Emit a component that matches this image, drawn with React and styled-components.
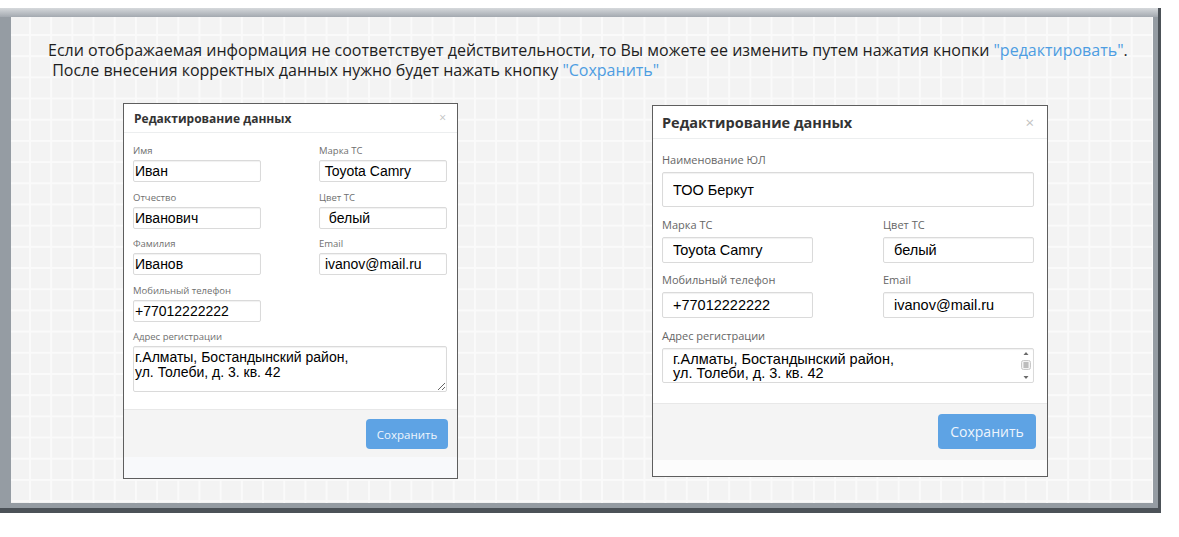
import React from 'react';
import styled, { createGlobalStyle } from 'styled-components';

const GlobalStyle = createGlobalStyle`
  html, body { margin: 0; padding: 0; background: #fff; }
  body { font-family: "Open Sans", "Noto Sans", sans-serif; }
`;

const S = {
  sm: {
    width: 335, height: 376, top: 0,
    headH: 29, headPad: '0 11px 0 10px', titleSize: 12, closeSize: 12,
    bodyPad: '12px 10px 17px 9px', colW: 128, colGap: 58, rowGap: 9.5,
    labelSize: 9.5, labelLH: 12, labelGap: 3, labelColor: '#6f6f6f',
    inputH: 22, tallH: 22, valueSize: 14, inputPadX: 1,
    areaH: 46, areaLH: 15, areaPad: '3px 1px',
    footPad: '9px 9px 8px', btnW: 82, btnH: 30, btnFont: 11.5,
    bg: '#f8f9fb',
  },
  lg: {
    width: 396, height: 372, top: 2,
    headH: 33, headPad: '0 13px 0 9px', titleSize: 14.5, closeSize: 15,
    bodyPad: '14px 13px 20px 9px', colW: 151, colGap: 70, rowGap: 10.5,
    labelSize: 11, labelLH: 14, labelGap: 5, labelColor: '#666',
    inputH: 26, tallH: 35, valueSize: 14.5, inputPadX: 10,
    areaH: 35, areaLH: 14, areaPad: '3px 16px 3px 10px',
    footPad: '10px 11px 11px', btnW: 98, btnH: 35, btnFont: 14,
    bg: '#fcfcfc',
  },
};

const v = (key) => (p) => S[p.$v][key];

const Page = styled.div`
  padding-top: 8px;
`;

const Frame = styled.div`
  width: 1161px;
  height: 505px;
  box-sizing: border-box;
  padding: 9px 8px 10px 11px;
  background: linear-gradient(to bottom, #d6d9dc 0, #a3a9b0 9px, #959ca3 9px);
  box-shadow: inset -3px -5px 0 #4c5258;
`;

const Board = styled.div`
  height: 100%;
  box-sizing: border-box;
  padding-top: 23px;
  background-color: #f3f3f3;
  background-image:
    linear-gradient(to right, #fafafa 0, #fafafa 2px, transparent 2px),
    linear-gradient(to bottom, #fafafa 0, #fafafa 2px, transparent 2px);
  background-size: 21.2px 21.2px;
  background-position: 18px 17px;
`;

const Message = styled.div`
  padding-left: 37px;
  font-size: 16px;
  line-height: 20px;
  color: #1e1e1e;
`;

const Line = styled.span`
  display: block;
  white-space: pre;
`;

const Link = styled.span`
  color: #4d9de2;
`;

const ModalsRow = styled.div`
  display: flex;
  align-items: flex-start;
  gap: 194px;
  margin-top: 23px;
  padding-left: 112px;
`;

const Modal = styled.div`
  width: ${v('width')}px;
  height: ${v('height')}px;
  margin-top: ${v('top')}px;
  box-sizing: border-box;
  border: 1px solid #5e5e5e;
  background: ${v('bg')};
  display: flex;
  flex-direction: column;
`;

const Header = styled.div`
  height: ${v('headH')}px;
  box-sizing: border-box;
  padding: ${v('headPad')};
  border-bottom: 1px solid #eceeef;
  background: #fff;
  display: flex;
  align-items: center;
  justify-content: space-between;
`;

const Title = styled.h4`
  margin: 0;
  font-size: ${v('titleSize')}px;
  font-weight: 700;
  color: #333;
`;

const Close = styled.span`
  font-size: ${v('closeSize')}px;
  line-height: 1;
  color: #c2c2c2;
`;

const Body = styled.div`
  background: #fff;
  padding: ${v('bodyPad')};
  display: grid;
  grid-template-columns: ${v('colW')}px ${v('colW')}px;
  column-gap: ${v('colGap')}px;
  row-gap: ${v('rowGap')}px;
`;

const Field = styled.div`
  grid-column: ${(p) => (p.$full ? '1 / -1' : 'auto')};
  display: flex;
  flex-direction: column;
`;

const Label = styled.label`
  font-size: ${v('labelSize')}px;
  line-height: ${v('labelLH')}px;
  margin-bottom: ${v('labelGap')}px;
  color: ${v('labelColor')};
`;

const Input = styled.input`
  width: 100%;
  height: ${(p) => (p.$tall ? S[p.$v].tallH : S[p.$v].inputH)}px;
  box-sizing: border-box;
  margin: 0;
  padding: 0 ${v('inputPadX')}px;
  border: 1px solid #dadada;
  border-radius: 2px;
  box-shadow: inset 0 1px 1px rgba(0, 0, 0, 0.06);
  background: #fff;
  outline: none;
  font-family: "Liberation Sans", Arial, sans-serif;
  font-size: ${v('valueSize')}px;
  color: #000;
`;

const AreaWrap = styled.div`
  position: relative;
  display: flex;
`;

const Area = styled.textarea`
  width: 100%;
  height: ${v('areaH')}px;
  box-sizing: border-box;
  margin: 0;
  padding: ${v('areaPad')};
  border: 1px solid #dadada;
  border-radius: 2px;
  box-shadow: inset 0 1px 1px rgba(0, 0, 0, 0.06);
  background: #fff;
  outline: none;
  font-family: "Liberation Sans", Arial, sans-serif;
  font-size: ${v('valueSize')}px;
  line-height: ${v('areaLH')}px;
  color: #000;
  overflow: hidden;
  resize: ${(p) => (p.$v === 'lg' ? 'none' : 'both')};
`;

const ScrollTrack = styled.svg`
  position: absolute;
  top: 1px;
  right: 2px;
  width: 12px;
  height: 33px;
`;

function ScrollIndicator() {
  return (
    <ScrollTrack viewBox="0 0 12 33">
      <path d="M3.5 6 L6 3 L8.5 6 Z" fill="#6a6a6a" />
      <rect x="1.5" y="11.5" width="9" height="9" rx="2" fill="#f2f2f2" stroke="#c8c8c8" />
      <path d="M3.5 14h5M3.5 16h5M3.5 18h5" stroke="#7a7a7a" strokeWidth="0.9" />
      <path d="M3.5 27 L6 30 L8.5 27 Z" fill="#6a6a6a" />
    </ScrollTrack>
  );
}

const Footer = styled.div`
  background: #f4f4f4;
  border-top: 1px solid #e8e8e8;
  padding: ${v('footPad')};
  display: flex;
  justify-content: flex-end;
`;

const SaveButton = styled.button`
  width: ${v('btnW')}px;
  height: ${v('btnH')}px;
  margin: 0;
  padding: 0;
  border: none;
  border-radius: 4px;
  background: #5ea3e4;
  color: #eef5fd;
  font-family: "Open Sans", "Noto Sans", sans-serif;
  font-size: ${v('btnFont')}px;
`;

const Filler = styled.div`
  flex: 1;
`;

const ADDRESS = 'г.Алматы, Бостандынский район,\nул. Толеби, д. 3. кв. 42';

function EditModal({ $v, fields }) {
  return (
    <Modal $v={$v}>
      <Header $v={$v}>
        <Title $v={$v}>Редактирование данных</Title>
        <Close $v={$v}>×</Close>
      </Header>
      <Body $v={$v}>
        {fields.map((f) => (
          <Field key={f.label} $full={f.full}>
            <Label $v={$v}>{f.label}</Label>
            {f.area ? (
              <AreaWrap>
                <Area $v={$v} defaultValue={f.value} readOnly />
                {$v === 'lg' && <ScrollIndicator />}
              </AreaWrap>
            ) : (
              <Input $v={$v} $tall={f.tall} defaultValue={f.value} readOnly />
            )}
          </Field>
        ))}
      </Body>
      <Footer $v={$v}>
        <SaveButton $v={$v}>Сохранить</SaveButton>
      </Footer>
      <Filler />
    </Modal>
  );
}

const personFields = [
  { label: 'Имя', value: 'Иван' },
  { label: 'Марка ТС', value: ' Toyota Camry' },
  { label: 'Отчество', value: 'Иванович' },
  { label: 'Цвет ТС', value: '  белый' },
  { label: 'Фамилия', value: 'Иванов' },
  { label: 'Email', value: ' ivanov@mail.ru' },
  { label: 'Мобильный телефон', value: '+77012222222' },
  { label: 'Адрес регистрации', value: ADDRESS, area: true, full: true },
];

const companyFields = [
  { label: 'Наименование ЮЛ', value: 'ТОО Беркут', full: true, tall: true },
  { label: 'Марка ТС', value: 'Toyota Camry' },
  { label: 'Цвет ТС', value: 'белый' },
  { label: 'Мобильный телефон', value: '+77012222222' },
  { label: 'Email', value: 'ivanov@mail.ru' },
  { label: 'Адрес регистрации', value: ADDRESS, area: true, full: true },
];

export default function App() {
  return (
    <Page>
      <GlobalStyle />
      <Frame>
        <Board>
          <Message>
            <Line>
              Если отображаемая информация не соответствует действительности, то Вы можете ее изменить путем нажатия кнопки{' '}
              <Link>"редактировать"</Link>.
            </Line>
            <Line>
              {' После внесения корректных данных нужно будет нажать кнопку '}
              <Link>"Сохранить"</Link>
            </Line>
          </Message>
          <ModalsRow>
            <EditModal $v="sm" fields={personFields} />
            <EditModal $v="lg" fields={companyFields} />
          </ModalsRow>
        </Board>
      </Frame>
    </Page>
  );
}
